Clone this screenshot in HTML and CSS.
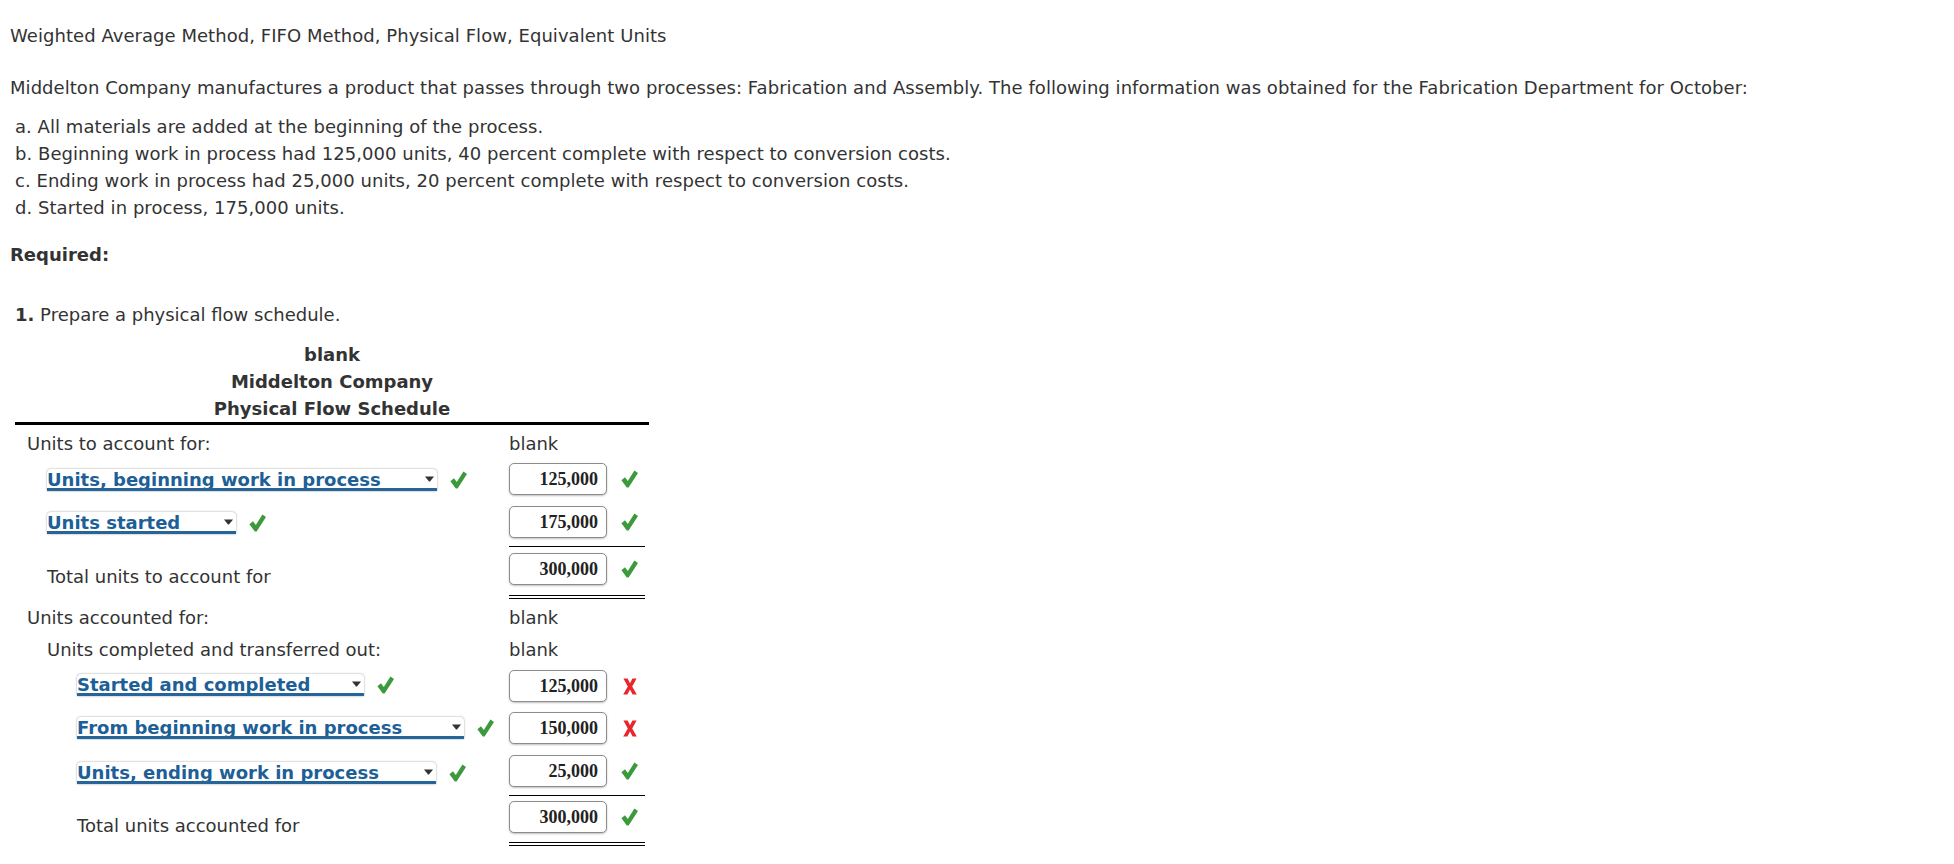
FILE: index.html
```html
<!DOCTYPE html>
<html>
<head>
<meta charset="utf-8">
<link rel="stylesheet" href="styles.css">
</head>
<body>
<div class="page">
  <p class="title">Weighted Average Method, FIFO Method, Physical Flow, Equivalent Units</p>
  <p class="intro">Middelton Company manufactures a product that passes through two processes: Fabrication and Assembly. The following information was obtained for the Fabrication Department for October:</p>
  <ol class="facts">
    <li>a. All materials are added at the beginning of the process.</li>
    <li>b. Beginning work in process had 125,000 units, 40 percent complete with respect to conversion costs.</li>
    <li>c. Ending work in process had 25,000 units, 20 percent complete with respect to conversion costs.</li>
    <li>d. Started in process, 175,000 units.</li>
  </ol>
  <p class="required">Required:</p>
  <p class="part"><b>1.</b> Prepare a physical flow schedule.</p>

  <div class="schedule">
    <div class="sched-head">
      <div>blank</div>
      <div>Middelton Company</div>
      <div>Physical Flow Schedule</div>
    </div>

    <div class="row row-a">
      <div class="label l0">Units to account for:</div>
      <div class="amt plain">blank</div>
    </div>

    <div class="row row-b">
      <div class="label l1">
        <div class="select w-beg"><span>Units, beginning work in process</span><svg class="arrow" viewBox="0 0 9 6"><path d="M0 0.4 H9 L5 5.6 H4 Z"/></svg></div>
        <svg class="ok" viewBox="0 0 17 18"><path d="M0.4 10.2 L4 7.2 L6.8 11 L13.4 0.4 L17 2.9 L7.6 17.6 L5.8 17.6 Z"/></svg>
      </div>
      <div class="amt"><div class="num">125,000</div><svg class="ok" viewBox="0 0 17 18"><path d="M0.4 10.2 L4 7.2 L6.8 11 L13.4 0.4 L17 2.9 L7.6 17.6 L5.8 17.6 Z"/></svg></div>
    </div>

    <div class="row row-c">
      <div class="label l1">
        <div class="select w-start"><span>Units started</span><svg class="arrow" viewBox="0 0 9 6"><path d="M0 0.4 H9 L5 5.6 H4 Z"/></svg></div>
        <svg class="ok" viewBox="0 0 17 18"><path d="M0.4 10.2 L4 7.2 L6.8 11 L13.4 0.4 L17 2.9 L7.6 17.6 L5.8 17.6 Z"/></svg>
      </div>
      <div class="amt single"><div class="num">175,000</div><svg class="ok" viewBox="0 0 17 18"><path d="M0.4 10.2 L4 7.2 L6.8 11 L13.4 0.4 L17 2.9 L7.6 17.6 L5.8 17.6 Z"/></svg></div>
    </div>

    <div class="row row-d">
      <div class="label l1 total">Total units to account for</div>
      <div class="amt double"><div class="num">300,000</div><svg class="ok" viewBox="0 0 17 18"><path d="M0.4 10.2 L4 7.2 L6.8 11 L13.4 0.4 L17 2.9 L7.6 17.6 L5.8 17.6 Z"/></svg></div>
    </div>

    <div class="row row-e">
      <div class="label l0">Units accounted for:</div>
      <div class="amt plain">blank</div>
    </div>

    <div class="row row-f">
      <div class="label l1">Units completed and transferred out:</div>
      <div class="amt plain">blank</div>
    </div>

    <div class="row row-g">
      <div class="label l2">
        <div class="select w-sc"><span>Started and completed</span><svg class="arrow" viewBox="0 0 9 6"><path d="M0 0.4 H9 L5 5.6 H4 Z"/></svg></div>
        <svg class="ok" viewBox="0 0 17 18"><path d="M0.4 10.2 L4 7.2 L6.8 11 L13.4 0.4 L17 2.9 L7.6 17.6 L5.8 17.6 Z"/></svg>
      </div>
      <div class="amt"><div class="num">125,000</div><svg class="bad" viewBox="0 0 14 17"><path d="M0.4 0.5 H4.6 L7 5.2 L9.4 0.5 H13.6 L9.2 8.4 L13.8 16.5 H9.6 L7 11.6 L4.4 16.5 H0.2 L4.8 8.4 Z"/></svg></div>
    </div>

    <div class="row row-h">
      <div class="label l2">
        <div class="select w-from"><span>From beginning work in process</span><svg class="arrow" viewBox="0 0 9 6"><path d="M0 0.4 H9 L5 5.6 H4 Z"/></svg></div>
        <svg class="ok" viewBox="0 0 17 18"><path d="M0.4 10.2 L4 7.2 L6.8 11 L13.4 0.4 L17 2.9 L7.6 17.6 L5.8 17.6 Z"/></svg>
      </div>
      <div class="amt"><div class="num">150,000</div><svg class="bad" viewBox="0 0 14 17"><path d="M0.4 0.5 H4.6 L7 5.2 L9.4 0.5 H13.6 L9.2 8.4 L13.8 16.5 H9.6 L7 11.6 L4.4 16.5 H0.2 L4.8 8.4 Z"/></svg></div>
    </div>

    <div class="row row-i">
      <div class="label l2">
        <div class="select w-end"><span>Units, ending work in process</span><svg class="arrow" viewBox="0 0 9 6"><path d="M0 0.4 H9 L5 5.6 H4 Z"/></svg></div>
        <svg class="ok" viewBox="0 0 17 18"><path d="M0.4 10.2 L4 7.2 L6.8 11 L13.4 0.4 L17 2.9 L7.6 17.6 L5.8 17.6 Z"/></svg>
      </div>
      <div class="amt single"><div class="num">25,000</div><svg class="ok" viewBox="0 0 17 18"><path d="M0.4 10.2 L4 7.2 L6.8 11 L13.4 0.4 L17 2.9 L7.6 17.6 L5.8 17.6 Z"/></svg></div>
    </div>

    <div class="row row-j">
      <div class="label l2 total">Total units accounted for</div>
      <div class="amt double"><div class="num">300,000</div><svg class="ok" viewBox="0 0 17 18"><path d="M0.4 10.2 L4 7.2 L6.8 11 L13.4 0.4 L17 2.9 L7.6 17.6 L5.8 17.6 Z"/></svg></div>
    </div>
  </div>
</div>
</body>
</html>
```

FILE: styles.css
```css
html, body {
  margin: 0;
  padding: 0;
  background: #ffffff;
}

body {
  font-family: "DejaVu Sans", Verdana, sans-serif;
  font-size: 18px;
  line-height: 27px;
  color: #333333;
}

.page {
  padding: 22px 0 0 10px;
}

p {
  margin: 0;
}

.title,
.intro,
.facts {
  letter-spacing: 0.05px;
}

.intro {
  margin-top: 25px;
}

.facts {
  list-style: none;
  margin: 12px 0 0 0;
  padding: 0 0 0 5px;
}

.required {
  margin-top: 20px;
  font-weight: bold;
}

.part {
  margin-top: 33px;
  padding-left: 5px;
}

.schedule {
  margin: 13px 0 0 5px;
  width: 634px;
}

.sched-head {
  text-align: center;
  font-weight: bold;
  border-bottom: 3px solid #000000;
}

.row {
  display: grid;
  grid-template-columns: 494px 136px;
}

.label {
  display: flex;
  align-items: center;
  white-space: nowrap;
}

.l0 { padding-left: 12px; }
.l1 { padding-left: 32px; }
.l2 { padding-left: 62px; }

.label.total {
  align-self: end;
  padding-bottom: 9px;
}

.row-j .label.total {
  padding-bottom: 7px;
}

.amt {
  display: flex;
  align-items: center;
  gap: 14px;
}

.amt.single {
  border-bottom: 1px solid #000000;
}

.amt.double {
  border-bottom: 4px double #000000;
}

.row-a { height: 36px; }
.row-b .amt { padding: 2px 0 3px; }
.row-c .amt { padding: 8px 0 8px; }
.row-d .amt { padding: 6px 0 10px; }
.row-e { height: 37px; }
.row-f { height: 27px; }
.row-g .amt { padding: 7px 0 4px; }
.row-h .amt { padding: 6px 0 5px; }
.row-i .amt { padding: 6px 0 8px; }
.row-j .amt { padding: 5px 0 9px; }

.num {
  box-sizing: border-box;
  width: 98px;
  height: 32px;
  border: 1px solid #8c8c8c;
  border-radius: 5px;
  box-shadow: 0 1px 2px rgba(0, 0, 0, 0.25);
  text-align: right;
  padding-right: 8px;
  font-family: "Liberation Serif", "Times New Roman", serif;
  font-weight: bold;
  font-size: 18px;
  line-height: 30px;
  color: #222222;
  background: #ffffff;
}

.select {
  position: relative;
  box-sizing: border-box;
  height: 22px;
  padding-top: 2px;
  padding-right: 3px;
  display: flex;
  align-items: flex-start;
  justify-content: space-between;
  background: #ffffff;
  border-radius: 4px 4px 1px 1px;
  box-shadow: 0 0 2px rgba(0, 0, 0, 0.45);
  color: #1d5f96;
  font-weight: bold;
  font-size: 18px;
  line-height: 18px;
}

.select::after {
  content: "";
  position: absolute;
  left: 0;
  right: 0;
  bottom: 0;
  height: 3px;
  background: #27649a;
}

.select span {
  display: block;
  white-space: nowrap;
}

.arrow {
  width: 9px;
  height: 6px;
  margin-top: 5px;
  fill: #333333;
  flex: none;
}

.w-beg { width: 390px; }
.w-start { width: 189px; }
.w-sc { width: 287px; }
.w-from { width: 387px; }
.w-end { width: 359px; }

.ok {
  width: 17px;
  height: 18px;
  fill: #3c9a3c;
  flex: none;
}

.label .ok {
  margin-left: 13px;
}

.bad {
  width: 14px;
  height: 17px;
  fill: #e8262c;
  flex: none;
  margin-left: 2px;
}
```
